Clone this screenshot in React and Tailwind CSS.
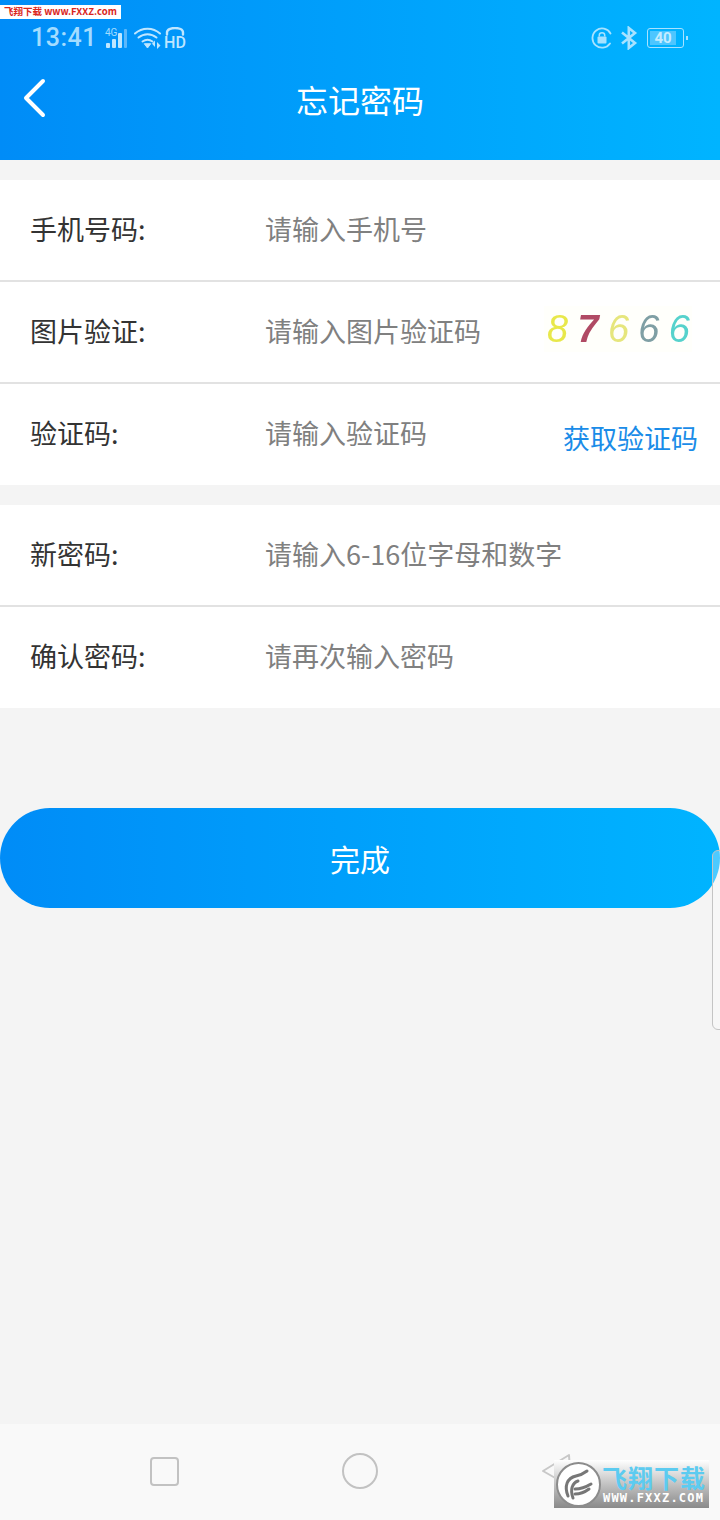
import React from 'react';

const cjk = "font-['Noto_Sans_CJK_SC','Noto_Sans',sans-serif]";

const Row = ({ label, hint, line, children }) => (
    <div className={`flex h-[101px] items-center bg-white pb-[2px] ${line ? 'border-b-2 border-[#e2e2e2] h-[102px]' : ''}`}>
        <div className="w-[265px] pl-[30px] text-[27px] text-[#333333]">{label}</div>
        <div className="text-[27px] text-[#808080]">{hint}</div>
        {children}
    </div>
);

const StatusLeft = () => (
    <div className="flex items-center">
        <span className="font-['Roboto',sans-serif] text-[25px] font-medium tracking-[0.5px] text-[#a3dcff]">13:41</span>
        <svg width="24" height="24" viewBox="0 0 24 24" className="ml-[8px]">
            <text x="0" y="10" fontSize="10" fontFamily="Roboto" fill="#a3dcff">4G</text>
            <rect x="1" y="17" width="4" height="5" rx="1" fill="#bfe6ff" />
            <rect x="7" y="13" width="4" height="9" rx="1" fill="#bfe6ff" />
            <rect x="13" y="7" width="4" height="15" rx="1" fill="#bfe6ff" />
            <rect x="19" y="3" width="3" height="19" rx="1" fill="#5cb8fb" />
        </svg>
        <svg width="28" height="24" viewBox="0 0 28 24" className="ml-[5px]" fill="none" stroke="#bfe6ff" strokeWidth="2" strokeLinecap="round">
            <path d="M1 7.5C8 1 19 1 26 7.5" />
            <path d="M4.5 11.5C10 7 17 7 22.5 11.5" />
            <path d="M8.5 15.5C12 13 15 13 18.5 15.5" />
            <path d="M10.5 18L13.5 22L16.5 18Z" fill="#bfe6ff" strokeWidth="1" />
            <path d="M21 14.5V21L18 17.8Z M23 16V23L26.5 19.5Z" fill="#bfe6ff" stroke="none" />
        </svg>
        <div className="ml-[2px] flex w-[22px] flex-col items-center">
            <svg width="20" height="9" viewBox="0 0 20 9" fill="none" stroke="#bfe6ff" strokeWidth="2.4" strokeLinecap="round">
                <path d="M2 7.5V5.5C2 -0.5 18 -0.5 18 5.5V7.5" />
            </svg>
            <span className="font-['Roboto',sans-serif] text-[16px] leading-[14px] font-medium text-[#bfe6ff]">HD</span>
        </div>
    </div>
);

const StatusRight = () => (
    <div className="flex items-center">
        <svg width="22" height="22" viewBox="0 0 22 22" fill="none">
            <path d="M19 16.5A9.6 9.6 0 1 1 19.5 6.5" stroke="#a8e2ff" strokeWidth="1.8" strokeLinecap="round" />
            <rect x="6.5" y="9.5" width="9" height="7" rx="1" fill="#a8e2ff" />
            <path d="M8.3 9.5V8C8.3 5 13.7 5 13.7 8V9.5" stroke="#a8e2ff" strokeWidth="1.5" />
        </svg>
        <svg width="18" height="24" viewBox="0 0 18 24" className="ml-[7px]" fill="none" stroke="#a8e2ff" strokeWidth="2.6">
            <path d="M2 6.5L15 17L8.8 22V2L15 7L2 17.5" />
        </svg>
        <div className="ml-[9px] flex h-[20px] w-[37px] items-center rounded-[3px] border border-[#a8e2ff]">
            <div className="ml-[2px] flex h-[14px] w-[26px] items-center justify-center bg-[#4dc6ff] font-['Roboto',sans-serif] text-[15px] font-bold text-[#c4ecff]">40</div>
        </div>
        <div className="ml-[2px] h-[4px] w-[2px] bg-[#a8e2ff]" />
    </div>
);

const Logo = () => (
    <div className="absolute top-[1460px] left-[554px] flex h-[48px] w-[155px] bg-gradient-to-b from-[#ffffff] to-[#8a8a8a]">
        <div className="absolute top-[2px] left-[2px] h-[45px] w-[45px] rounded-full border-2 border-[#8c8c8c] bg-white">
            <svg width="41" height="41" viewBox="0 0 41 41" fill="none" stroke="#777777" strokeWidth="3" strokeLinecap="round">
                <path d="M10 32C6 22 9 14 18 12C23 11 25 10 29 7" />
                <path d="M15 34C12 26 14 19 20 17" />
                <path d="M17 25C23 25 28 23 33 20" />
                <path d="M17 30C23 30 27 28 31 25" />
            </svg>
        </div>
        <div className={`absolute top-[3px] left-[48px] text-[25px] leading-[28px] font-bold tracking-[1px] whitespace-nowrap text-[#5ccbf0] ${cjk}`}>飞翔下载</div>
        <div className="absolute top-[31px] left-[49px] font-['DejaVu_Sans_Mono',monospace] text-[12px] leading-[14px] font-bold tracking-[1.2px] whitespace-nowrap text-white">WWW.FXXZ.COM</div>
    </div>
);

export default function App() {
    return (
        <div className={`relative flex h-[1520px] w-[720px] flex-col overflow-hidden bg-[#f4f4f4] ${cjk}`}>
            <header className="flex h-[160px] flex-col bg-gradient-to-r from-[#008cf7] to-[#00b4ff]">
                <div className="flex h-[74px] items-center justify-between pt-[2px] pr-[32px] pl-[31px]">
                    <StatusLeft />
                    <StatusRight />
                </div>
                <div className="relative flex h-[50px] items-center justify-center text-[32px] text-white">
                    <svg width="24" height="40" viewBox="0 0 24 40" className="absolute top-[4px] left-[22px]" fill="none" stroke="white" strokeWidth="4" strokeLinecap="round" strokeLinejoin="round">
                        <path d="M21 3L4 20L21 37" />
                    </svg>
                    忘记密码
                </div>
            </header>

            <section className="mt-[20px]">
                <Row label="手机号码:" hint="请输入手机号" line />
                <Row label="图片验证:" hint="请输入图片验证码" line>
                    <div className="ml-auto mr-[28px] mb-[4px] flex w-[148px] justify-between bg-[#fffffb] pl-[3px] pr-[2px] font-['Liberation_Sans',sans-serif] text-[38px] leading-[46px] italic blur-[0.5px]">
                        <span className="text-[#e8e84a]">8</span>
                        <span className="font-bold text-[#b04a64]">7</span>
                        <span className="text-[#e6e67c]">6</span>
                        <span className="text-[#7f9fa4]">6</span>
                        <span className="text-[#56d2cc]">6</span>
                    </div>
                </Row>
                <Row label="验证码:" hint="请输入验证码">
                    <div className="mt-[10px] mr-[22px] ml-auto text-[27px] text-[#1a8ce8]">获取验证码</div>
                </Row>
            </section>

            <section className="mt-[20px]">
                <Row label="新密码:" hint="请输入6-16位字母和数字" line />
                <Row label="确认密码:" hint="请再次输入密码" />
            </section>

            <button className="mt-[100px] flex h-[100px] w-[720px] items-center justify-center rounded-full bg-gradient-to-r from-[#008cf7] to-[#00b4ff] text-[30px] text-white">
                完成
            </button>

            <nav className="mt-auto flex h-[96px] items-center bg-[#f9f9f9] pb-[2px]">
                <div className="ml-[150px] h-[29px] w-[29px] rounded-[4px] border-2 border-[#c2c2c2]" />
                <div className="ml-[163px] h-[36px] w-[36px] rounded-full border-2 border-[#c2c2c2]" />
                <svg width="32" height="36" viewBox="0 0 32 36" className="ml-[163px]" fill="none" stroke="#c8c8c8" strokeWidth="2" strokeLinejoin="round">
                    <path d="M2 18L28 2L30 34Z" />
                </svg>
            </nav>

            {/* site watermarks and the floating side handle sit over the page */}
            <div className="absolute top-[5px] left-0 flex h-[14px] w-[121px] items-center bg-white pl-[4px] text-[9.5px] leading-none font-bold whitespace-nowrap text-[#d9251c]">
                飞翔下载 www.FXXZ.com
            </div>
            <div className="absolute top-[850px] left-[712px] h-[180px] w-[10px] rounded-l-[6px] border border-[#c4c4c4] bg-white/30" />
            <Logo />
        </div>
    );
}
